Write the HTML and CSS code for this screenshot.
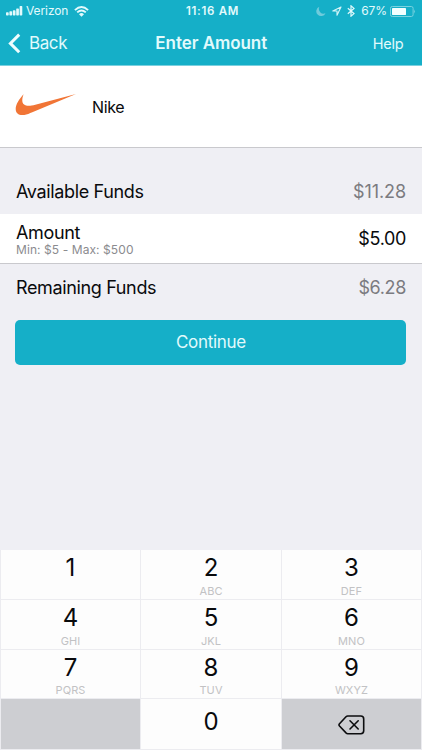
FILE: index.html
```html
<!DOCTYPE html>
<html lang="en">
<head>
<meta charset="utf-8">
<title>Enter Amount</title>
<link rel="stylesheet" href="styles.css">
</head>
<body>
<div class="screen">
  <header class="header">
    <div class="status">
      <div class="status-left">
        <svg class="signal" width="17" height="10" viewBox="0 0 17 10" fill="#e2fafc"><rect x="0" y="6.3" width="2.7" height="3.2" rx=".7"/><rect x="3.4" y="5.2" width="2.7" height="4.3" rx=".7"/><rect x="6.8" y="4.2" width="2.7" height="5.3" rx=".7"/><rect x="10.2" y="2.4" width="2.7" height="7.1" rx=".7"/><rect x="13.6" y="0" width="2.7" height="9.5" rx=".7"/></svg>
        <span class="carrier">Verizon</span>
        <svg class="wifi" width="15" height="11" viewBox="0 0 15 11" fill="none" stroke="#e2fafc" stroke-width="1.9"><path d="M.9 4.1Q7.5-2 14.1 4.1M3.2 6.4Q7.5 2.5 11.8 6.4"/><path d="M5 8.2Q7.5 6 10 8.2L7.5 10.7Z" fill="#e2fafc" stroke="none"/></svg>
      </div>
      <span class="clock">11:16 AM</span>
      <div class="status-right">
        <svg class="moon" width="10" height="11" viewBox="0 0 10 11"><path d="M3.4.8A4.8 4.8 0 1 0 9.5 7.2 4.7 4.7 0 0 1 3.4.8Z" fill="#6fcbdc"/></svg>
        <svg class="location" width="10" height="10" viewBox="0 0 10 10"><path d="M9 1 .8 5H5V9.2Z" fill="none" stroke="#d5f5f8" stroke-width="1.1" stroke-linejoin="round"/></svg>
        <svg class="bluetooth" width="8" height="12" viewBox="0 0 8 12"><path d="M.8 3.2 7 8.6 4 11.2V.8L7 3.4.8 8.8" fill="none" stroke="#e2fafc" stroke-width="1.2"/></svg>
        <span class="percent">67%</span>
        <svg class="battery" width="26" height="11" viewBox="0 0 26 11"><rect x=".5" y=".5" width="22.6" height="10" rx="1.8" fill="none" stroke="#79d2df"/><rect x="2" y="2" width="14" height="7" rx=".4" fill="#f2ffff"/><path d="M24.2 3.6Q26 5.5 24.2 7.4Z" fill="#79d2df"/></svg>
      </div>
    </div>
    <nav class="nav">
      <a class="back"><svg width="13" height="21" viewBox="0 0 13 21"><path d="M11.2 1.6 2.4 10.4 11.2 19.2" fill="none" stroke="#effdfe" stroke-width="3"/></svg><span class="back-label">Back</span></a>
      <h1 class="title">Enter Amount</h1>
      <a class="help">Help</a>
    </nav>
  </header>
  <section class="merchant">
    <svg class="logo" width="62" height="24" viewBox="0 0 62 24"><path d="M8.6 1.2C4.300 6 .6 11.300.7 16c.1 4.800 3.600 6.700 8.600 5.900 2.600-.4 5.300-1.500 8-2.700L61 .9 20.300 11.700C15.500 13 11.300 13.400 9.100 11.500 6.600 9.400 7 5.300 8.600 1.200Z" fill="#f17536"/></svg>
    <span class="merchant-name">Nike</span>
  </section>
  <main class="funds">
    <div class="row available"><span>Available Funds</span><span class="muted value-available">$11.28</span></div>
    <div class="row amount"><div class="amount-info"><span class="label-amount">Amount</span><small class="limits">Min: $5 - Max: $500</small></div><span>$5.00</span></div>
    <div class="row remaining"><span>Remaining Funds</span><span class="muted">$6.28</span></div>
    <button class="continue">Continue</button>
  </main>
  <div class="keypad">
    <div class="key">1</div>
    <div class="key">2<small>ABC</small></div>
    <div class="key">3<small>DEF</small></div>
    <div class="key">4<small>GHI</small></div>
    <div class="key">5<small>JKL</small></div>
    <div class="key">6<small>MNO</small></div>
    <div class="key low">7<small>PQRS</small></div>
    <div class="key low">8<small>TUV</small></div>
    <div class="key low">9<small>WXYZ</small></div>
    <div class="key blank"></div>
    <div class="key zero">0</div>
    <div class="key delete"><svg width="27" height="20" viewBox="0 0 27 20" fill="none" stroke="#0c0d0f" stroke-width="1.6" stroke-linejoin="round" stroke-linecap="round"><path d="M9.700 1H22.800Q25.700 1 25.700 3.900V15.800Q25.700 18.700 22.800 18.700H9.700Q8.800 18.700 8 17.900L1.500 11Q.5 9.900 1.500 8.800L8 1.800Q8.800 1 9.700 1Z"/><path d="M12 5.800 20.200 14M20.200 5.800 12 14"/></svg></div>
  </div>
</div>
</body>
</html>
```
FILE: styles.css
```css
* { box-sizing: border-box; }
body { margin: 0; font-family: Inter, "Liberation Sans", sans-serif; color: #090a0c; }
.screen { width: 422px; height: 750px; display: flex; flex-direction: column; background: #efeff4; overflow: hidden; white-space: nowrap; }
.header { height: 66px; background: #15afc8; border-bottom: 1px solid #7bd0df; color: #e2fafc; }
.status { height: 22px; display: grid; grid-template-columns: 1fr auto 1fr; align-items: center; padding: 0 6px; font-size: 12px; line-height: 22px; }
.status-left, .status-right { display: flex; align-items: center; }
.status-right { justify-content: flex-end; }
.carrier { margin-left: 3px; letter-spacing: -.1px; }
.wifi { margin-left: 6px; }
.clock { font-weight: 600; font-size: 11.5px; letter-spacing: .7px; margin-left: 3px; }
.location { margin-left: 6px; }
.bluetooth { margin-left: 5px; }
.percent { margin-left: 6px; letter-spacing: -.1px; }
.battery { margin-left: 3px; }
.nav { height: 43px; display: grid; grid-template-columns: 1fr auto 1fr; align-items: center; padding: 0 18.5px 1px 8px; }
.back { display: flex; align-items: center; gap: 8px; font-size: 17px; }
.back-label { letter-spacing: -.4px; }
.title { margin: 0 -11px 0 0; font-size: 17px; font-weight: 600; letter-spacing: -.05px; }
.help { justify-self: end; font-size: 14.5px; letter-spacing: -.2px; }
.merchant { height: 82px; display: flex; align-items: center; background: #fff; border-bottom: 1px solid #c9c9cd; padding-left: 15px; }
.logo { margin-top: -3px; }
.merchant-name { margin-left: 15px; font-size: 16px; letter-spacing: -.4px; }
.funds { flex: 1; padding-top: 22px; }
.row { display: flex; align-items: center; justify-content: space-between; padding: 0 16px; font-size: 18px; letter-spacing: -.36px; }
.available { height: 44px; padding-bottom: 2px; }
.value-available { letter-spacing: -.1px; }
.amount { height: 50px; background: #fff; border-bottom: 1px solid #c9c9cd; }
.amount-info { display: flex; flex-direction: column; }
.label-amount { line-height: 22px; }
.limits { font-size: 12px; line-height: 13px; margin-top: -1px; color: #8b8b8f; letter-spacing: .08px; }
.remaining { height: 46px; }
.muted { color: #7b7b80; }
.continue { display: block; width: 391px; height: 45px; margin: 10px 0 0 15.4px; padding: 0; border: 0; border-radius: 5px; background: #15afc8; color: #e2fafc; font: 17px/45px Inter, sans-serif; letter-spacing: -.3px; }
.keypad { height: 200px; display: grid; grid-template-columns: 139px 140px 139px; grid-template-rows: 49px 49px 48px 50px; gap: 1px; padding: 0 1px 1px; background: #ececf0; }
.key { display: flex; flex-direction: column; align-items: center; background: #fdfdfd; font-size: 24px; line-height: 34px; padding-top: 1px; }
.key small { font-size: 11px; line-height: 13px; color: #c2c2c4; letter-spacing: .1px; }
.low { padding-top: 1px; }
.low small { margin-top: -1px; }
.zero { padding-top: 6px; }
.blank, .delete { background: #cdced2; }
.delete { justify-content: center; padding: 1px 0 0; }
```
